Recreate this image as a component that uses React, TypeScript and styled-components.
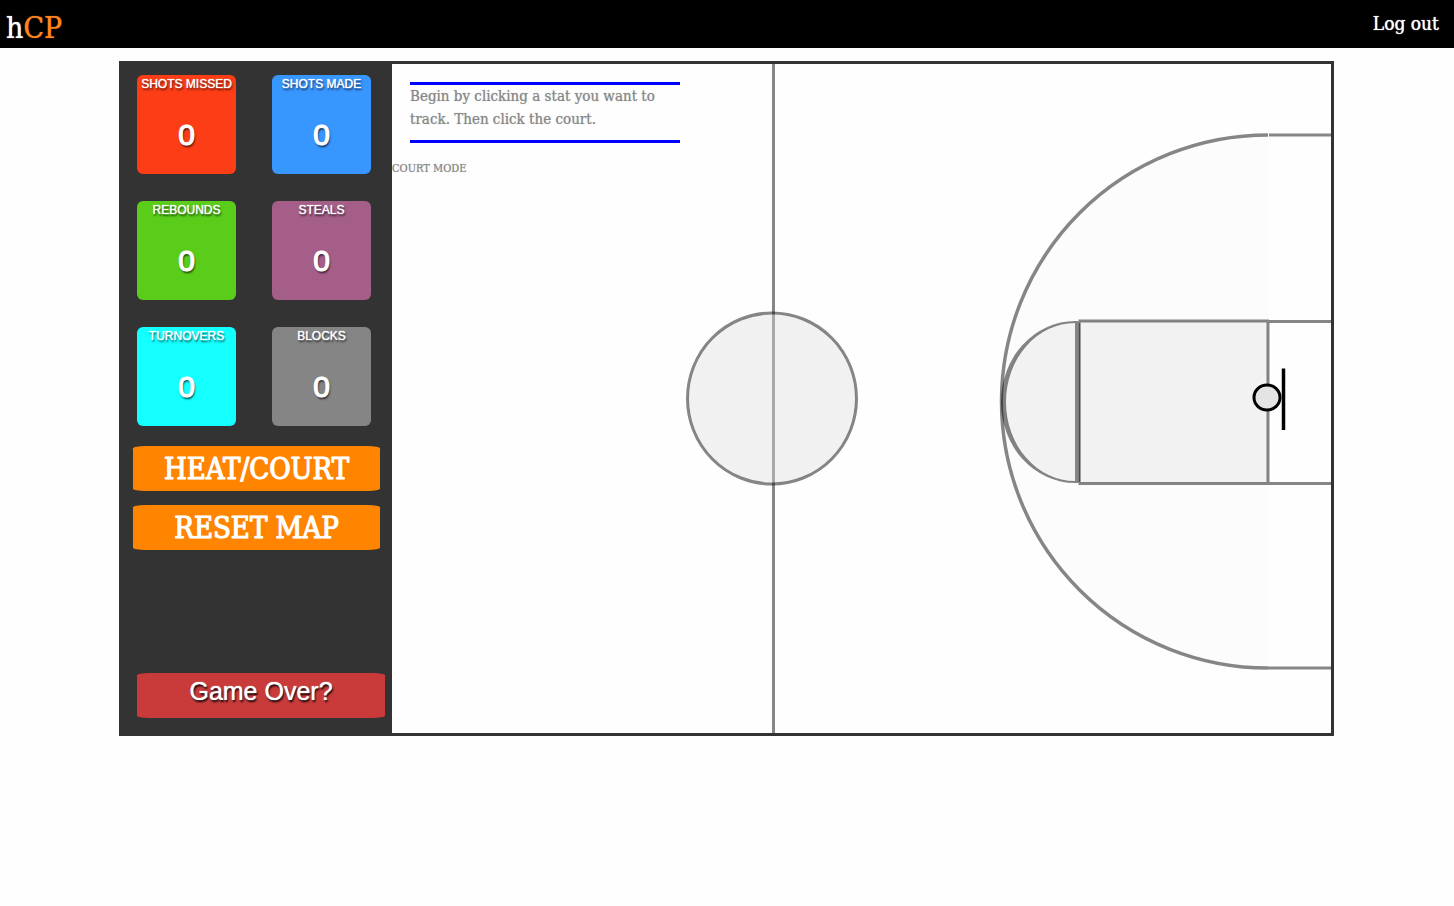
import React, { useState } from "react";
import styled, { createGlobalStyle } from "styled-components";

const slab = '"Roboto Slab", "DejaVu Serif Condensed", "DejaVu Serif", serif';
const sans = '"Liberation Sans", Arial, sans-serif';

const GlobalStyle = createGlobalStyle`
  * { box-sizing: border-box; }
  body {
    margin: 0;
    background: #fefefe;
    font-family: ${slab};
    font-stretch: condensed;
  }
`;

const Header = styled.header`
  display: flex;
  justify-content: space-between;
  height: 48px;
  padding: 0 15px 0 6px;
  background: #000;
`;

const Logo = styled.a`
  color: #fff;
  font-size: 30px;
  line-height: 56px;
  text-decoration: none;
  text-shadow: 0 0 1px currentColor;
`;

const LogoAccent = styled.span`
  color: #ff851b;
  text-shadow: 0 0 1px currentColor;
`;

const LogOut = styled.a`
  color: #fff;
  font-size: 19px;
  line-height: 46px;
  text-decoration: none;
  text-shadow: 0 0 1px #fff;
`;

const Main = styled.main`
  padding: 13px 120px 0 119px;
`;

const Board = styled.div`
  display: flex;
  border: 3px solid #333;
`;

const Sidebar = styled.aside`
  display: flex;
  flex: 0 0 270px;
  flex-direction: column;
  padding: 11px 7px 15px 11px;
  background: #333;
`;

const StatGrid = styled.div`
  display: grid;
  grid-template-columns: repeat(2, 99px);
  gap: 27px 36px;
  margin: 0 0 20px 4px;
`;

const StatButton = styled.button<{ $color: string }>`
  display: flex;
  flex-direction: column;
  align-items: center;
  height: 99px;
  padding: 1px 0 0;
  border: 0;
  border-radius: 6px;
  background: ${(p) => p.$color};
  color: #fff;
  font-family: ${sans};
  text-shadow: 0 0 1px #fff, 1px 2px 2px rgba(0, 0, 0, 0.7);
  cursor: pointer;
`;

const StatName = styled.span`
  font-size: 12px;
  line-height: 16px;
  white-space: nowrap;
`;

const StatCount = styled.span`
  margin-top: 26px;
  font-size: 30px;
  line-height: 34px;
  -webkit-text-stroke: 1px #fff;
`;

const ActionButton = styled.button`
  height: 45px;
  margin: 0 5px 14px 0;
  padding: 2px 0 0;
  border: 0;
  border-radius: 5%;
  background: #ff8500;
  color: #fff;
  font-family: ${slab};
  font-size: 29px;
  line-height: 43px;
  text-shadow: 0 0 1px #fff;
  -webkit-text-stroke: 1px #fff;
  cursor: pointer;
`;

const GameOverButton = styled.button`
  height: 45px;
  margin: auto 0 0 4px;
  padding: 0 0 8px;
  border: 0;
  border-radius: 5%;
  background: #c93b3b;
  color: #fff;
  font-family: ${sans};
  font-size: 25px;
  line-height: 37px;
  text-shadow: 0 0 1px #fff, 1px 2px 2px #000;
  cursor: pointer;
`;

const Court = styled.section`
  display: grid;
  flex: 1;
  min-width: 0;

  > * {
    grid-area: 1 / 1;
  }
`;

const CourtLines = styled.svg`
  display: block;
  width: 100%;
  height: auto;
`;

const Notes = styled.div`
  justify-self: start;
  color: #888;
  text-shadow: 0 0 1px #aaa;
`;

const Instructions = styled.p`
  width: 270px;
  height: 61px;
  margin: 18px 18px 0;
  border: solid #00f;
  border-width: 3px 0;
  font-size: 15px;
  line-height: 23px;
`;

const Mode = styled.p`
  margin: 18px 0 0;
  font-size: 11px;
  line-height: 16px;
`;

const stats = [
  { name: "SHOTS MISSED", color: "#fc3d16" },
  { name: "SHOTS MADE", color: "#3896ff" },
  { name: "REBOUNDS", color: "#59cd19" },
  { name: "STEALS", color: "#a45e88" },
  { name: "TURNOVERS", color: "#14ffff" },
  { name: "BLOCKS", color: "#858585" },
];

function CourtDrawing() {
  return (
    <CourtLines viewBox="0 0 939 669" role="img" aria-label="Half court">
      <g fill="none" stroke="#000" strokeOpacity="0.47" strokeWidth="3">
        <path d="M381.5 0V669" />
        <ellipse cx="380" cy="334.500" rx="84" ry="85" fill="#dedede" fillOpacity="0.4" stroke="none" />
        <ellipse cx="380" cy="334.500" rx="84.500" ry="85.500" />
        <path d="M876 71C730 71 610 188 610 337.500S730 604 876 604Z" fill="#fcfcfc" stroke="none" />
        <path d="M876 71A266.500 266.500 0 0 0 876 604" strokeWidth="3.500" />
        <path d="M877 71H939M876 604H939" />
        <path d="M683 258A72 80 0 0 0 683 418Z" fill="#f2f2f2" stroke="none" />
        <path
          d="M683 257A74 81 0 0 0 683 419V417A69 79 0 0 1 683 259Z"
          fill="#000"
          fillOpacity="0.47"
          stroke="none"
        />
        <path d="M684.750 257V419" strokeWidth="3.500" />
        <rect x="688" y="257" width="188" height="162" fill="#f2f2f2" stroke="none" />
        <path d="M686.500 257H877M686.500 419.500H877M876 258.500V418" />
        <path d="M687.500 258.500V418" strokeOpacity="0.7" strokeWidth="2" />
        <path d="M877 257.500H939M877 419.500H939" />
      </g>
      <ellipse cx="875" cy="333.500" rx="13" ry="12.500" fill="#e4e4e4" stroke="#000" strokeWidth="3" />
      <path d="M891.500 304.500V366" stroke="#000" strokeWidth="3.500" />
    </CourtLines>
  );
}

export default function App() {
  const [counts, setCounts] = useState<number[]>(stats.map(() => 0));
  const [heat, setHeat] = useState(false);

  const add = (index: number) =>
    setCounts((prev) => prev.map((n, i) => (i === index ? n + 1 : n)));
  const reset = () => setCounts(stats.map(() => 0));

  return (
    <>
      <GlobalStyle />
      <Header>
        <Logo href="#">
          h<LogoAccent>CP</LogoAccent>
        </Logo>
        <LogOut href="#logout">Log out</LogOut>
      </Header>
      <Main>
        <Board>
          <Sidebar>
            <StatGrid>
              {stats.map((stat, i) => (
                <StatButton key={stat.name} type="button" $color={stat.color} onClick={() => add(i)}>
                  <StatName>{stat.name}</StatName>
                  <StatCount>{counts[i]}</StatCount>
                </StatButton>
              ))}
            </StatGrid>
            <ActionButton type="button" onClick={() => setHeat(!heat)}>
              HEAT/COURT
            </ActionButton>
            <ActionButton type="button" onClick={reset}>
              RESET MAP
            </ActionButton>
            <GameOverButton type="button">Game Over?</GameOverButton>
          </Sidebar>
          <Court>
            <CourtDrawing />
            <Notes>
              <Instructions>Begin by clicking a stat you want to track. Then click the court.</Instructions>
              <Mode>{heat ? "HEAT MODE" : "COURT MODE"}</Mode>
            </Notes>
          </Court>
        </Board>
      </Main>
    </>
  );
}
